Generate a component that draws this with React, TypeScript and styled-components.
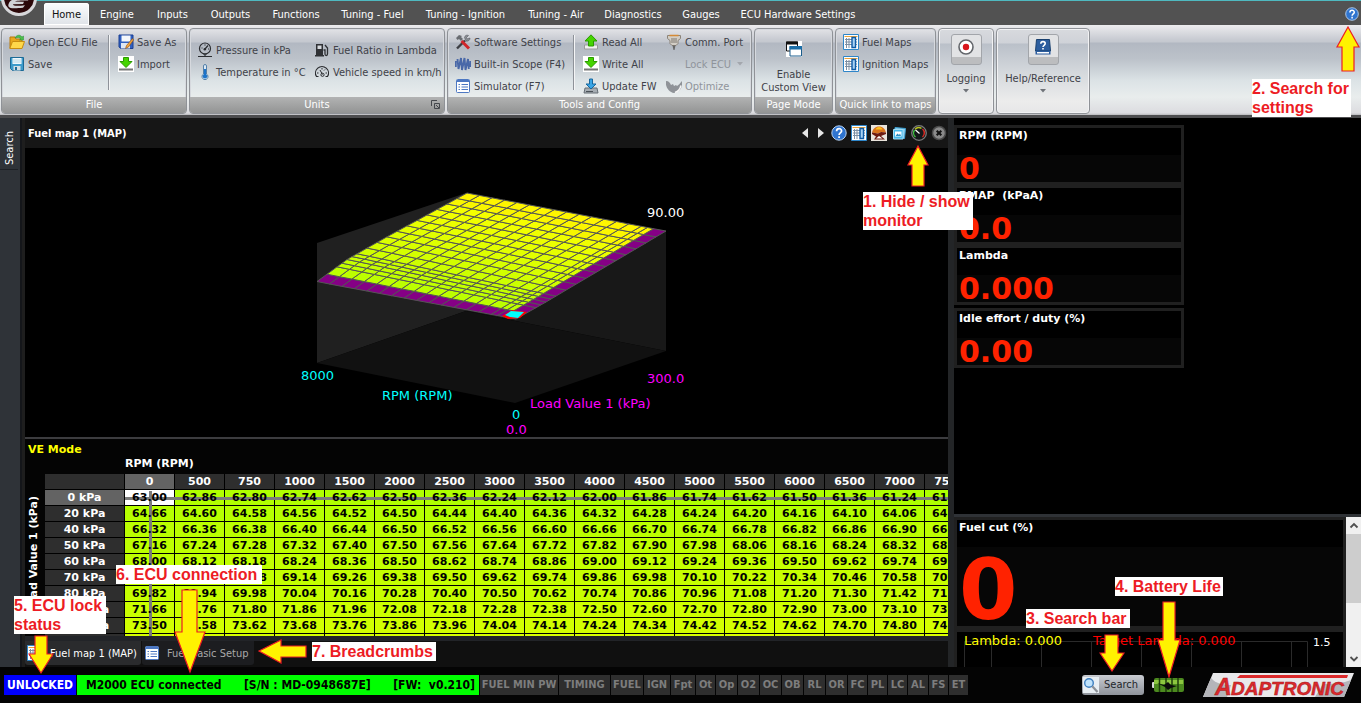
import React from "react";
import styled, { createGlobalStyle, css } from "styled-components";

const ui = `"DejaVu Sans Condensed", "Noto Sans", sans-serif`;
const wide = `"DejaVu Sans", sans-serif`;

const Global = createGlobalStyle`
  *, *::before, *::after { box-sizing: border-box; }
  html, body, #root { height: 100%; margin: 0; }
  body { background: #000; font-family: ${ui}; font-size: 11px; overflow: hidden; }
  button { font: inherit; color: inherit; background: none; border: 0; padding: 0; margin: 0; text-align: inherit; white-space: nowrap; }
  svg { display: block; flex: none; }
`;

const Page = styled.div`
  position: relative;
  display: flex;
  flex-direction: column;
  height: 100vh;
  overflow: hidden;
`;

/* ---------- menu ---------- */
const MenuBar = styled.header`
  flex: none;
  display: flex;
  align-items: stretch;
  height: 25px;
  padding: 2px 2px 0 0;
  border-top: 1px solid #4fb9c0;
  background: #525252;
`;
const LogoSlot = styled.div`
  width: 44px;
  margin-top: -3px;
  overflow: hidden;
`;
const MenuTabs = styled.nav`
  display: flex;
  flex: 1;
`;
const MenuTab = styled.button<{ $w: number; $active?: boolean }>`
  width: ${(p) => p.$w}px;
  text-align: center;
  color: #fff;
  ${(p) =>
    p.$active &&
    css`
      color: #111;
      background: linear-gradient(#fbfcfd, #dfe3e8);
      border-radius: 3px 3px 0 0;
      box-shadow: inset 0 0 0 1px #fff;
    `}
`;

/* ---------- ribbon ---------- */
const Ribbon = styled.section`
  flex: none;
  display: flex;
  gap: 2px;
  height: 93px;
  padding: 3px 1px 2px;
  border-bottom: 3px solid #4d4d4f;
  background: linear-gradient(#ececee 0, #c9ccd3 14px, #c4c8cf 17px, #b2b8c2 18px, #bcc2ca 34px, #dce3e6 56px, #e9eded 72px, #dcdce0 88px, #b9b9bc 90px);
`;
const Group = styled.div<{ $w: number; $light?: boolean }>`
  flex: none;
  display: flex;
  flex-direction: column;
  width: ${(p) => p.$w}px;
  height: 86px;
  border: 1px solid #8f9297;
  border-radius: 4px;
  overflow: hidden;
  color: #3f4249;
  box-shadow: inset 0 0 0 1px #d6d9de;
  ${(p) =>
    p.$light &&
    css`
      background: linear-gradient(#d8dade 0, #cfd2d8 14px, #bac0c9 15px, #d5d9dd 44px, #ececec 72px, #e6e6e8 84px);
      box-shadow: inset 0 0 0 1px #f2f2f4;
    `}
`;
const GroupBody = styled.div<{ $top?: number }>`
  flex: 1;
  display: flex;
  padding: ${(p) => p.$top ?? 2}px 0 0 7px;
`;
const GroupFoot = styled.div`
  position: relative;
  height: 16px;
  line-height: 16px;
  text-align: center;
  color: #fff;
  background: linear-gradient(#b2b3b3, #939494);
`;
const Launcher = styled.button`
  position: absolute;
  right: 4px;
  top: 3px;
`;
const Column = styled.div<{ $w: number }>`
  width: ${(p) => p.$w}px;
  flex: none;
`;
const Divider = styled.div`
  width: 2px;
  height: 55px;
  margin: 4px 8px 0 0;
  background: #8e9299;
  border-right: 1px solid #f4f5f6;
`;
const Tool = styled.button<{ $off?: boolean }>`
  display: flex;
  align-items: center;
  gap: 3px;
  height: 22px;
  color: ${(p) => (p.$off ? "#8f949b" : "inherit")};
`;
const IconBox = styled.span`
  width: 16px;
  height: 16px;
`;
const Big = styled.button`
  flex: 1;
  display: flex;
  flex-direction: column;
  align-items: center;
  line-height: 13px;
  text-align: center;
`;
const BigIcon = styled.span<{ $framed?: boolean }>`
  display: flex;
  justify-content: center;
  ${(p) =>
    p.$framed
      ? css`
          width: 31px;
          height: 31px;
          margin: 5px 0 7px;
          padding-top: 4px;
          border: 1px solid #a2a5aa;
          border-radius: 3px;
          background: linear-gradient(#e2e3e5 0 22px, #bcbdbf 22px);
        `
      : css`
          margin: 12px 0 11px;
        `}
`;

/* ---------- work area ---------- */
const Main = styled.main`
  flex: 1;
  min-height: 0;
  display: flex;
`;
const SideRail = styled.aside`
  flex: none;
  width: 25px;
  background: #2f3338;
  border-right: 3px solid #1e1e1e;
  box-shadow: inset -2px 0 0 #14161a;
`;
const RailTab = styled.button`
  writing-mode: vertical-rl;
  transform: rotate(180deg);
  width: 18px;
  height: 52px;
  padding: 4px 0 0 0;
  color: #fff;
  line-height: 15px;
  border-top: 1px solid #1e2126;
`;
const Work = styled.section`
  flex: 1;
  min-width: 0;
  display: flex;
  flex-direction: column;
  background: #000;
`;
const TitleBar = styled.div`
  flex: none;
  display: flex;
  align-items: center;
  gap: 4px;
  height: 30px;
  padding: 0 1px 0 3px;
  background: #161616;
  color: #fff;
`;
const PaneTitle = styled.h1`
  flex: 1;
  margin: 0;
  font-size: 11px;
  font-weight: bold;
`;
const ChartPane = styled.div`
  flex: 1;
  min-height: 0;
  svg {
    width: 100%;
    height: 100%;
    font-family: ${wide};
    font-size: 13px;
  }
`;
const TablePane = styled.div`
  flex: none;
  height: 199px;
  padding-top: 4px;
  overflow: hidden;
  border-top: 2px solid #3c3c3f;
  background: #040404;
  font-family: ${wide};
  font-size: 11px;
  font-weight: bold;
  color: #fff;
`;
const Mode = styled.div`
  padding-left: 3px;
  line-height: 14px;
  color: #ff0;
`;
const AxisTitle = styled.div`
  padding-left: 100px;
  line-height: 14px;
`;
const TableRow = styled.div`
  display: flex;
  margin-top: 3px;
`;
const LoadAxis = styled.div`
  flex: none;
  width: 20px;
  height: 162px;
  padding-bottom: 22px;
  writing-mode: vertical-rl;
  transform: rotate(180deg);
  line-height: 18px;
  text-align: right;
  white-space: nowrap;
`;
const GridWrap = styled.div`
  position: relative;
  z-index: 0;
  flex: none;
  &::before,
  &::after {
    content: "";
    position: absolute;
    background: #7b7b7b;
  }
  &::before {
    left: 80px;
    right: 0;
    top: 23px;
    height: 3px;
  }
  &::after {
    left: 104px;
    width: 3px;
    top: 17px;
    bottom: 0;
  }
`;
const Table = styled.table`
  table-layout: fixed;
  width: 930px;
  border-collapse: separate;
  border-spacing: 0;
  line-height: 15px;
  text-align: center;
  th,
  td {
    height: 16px;
    padding: 0;
    border-right: 1px solid #000;
    border-bottom: 1px solid #000;
  }
  td {
    color: #000;
  }
`;
const HeadCell = styled.th<{ $on?: boolean }>`
  background: ${(p) => (p.$on ? "#636363" : "#2e2e2e")};
`;
const Cell = styled.td<{ $c: string }>`
  background: ${(p) => p.$c};
`;
const CellText = styled.span`
  position: relative;
  z-index: 1;
`;
const DocTabs = styled.div`
  flex: none;
  display: flex;
  gap: 1px;
  height: 31px;
  padding-bottom: 2px;
  border-top: 5px solid #222428;
  background: #101010;
`;
const DocTab = styled.button<{ $w: number; $on?: boolean }>`
  display: flex;
  align-items: center;
  gap: 7px;
  width: ${(p) => p.$w}px;
  padding-left: 2px;
  border-radius: 0 0 3px 3px;
  color: ${(p) => (p.$on ? "#fff" : "#a9a9a9")};
  background: ${(p) => (p.$on ? "#2a2b2d" : "#1c1d20")};
`;

/* ---------- monitor ---------- */
const Monitor = styled.aside`
  flex: none;
  width: 413px;
  display: flex;
  flex-direction: column;
  border-left: 6px solid #232527;
  background: #000;
  font-family: ${wide};
  color: #fff;
`;
const Gauges = styled.div`
  flex: 1;
  padding-top: 7px;
`;
const Gauge = styled.div<{ $gap?: boolean; $big?: boolean }>`
  width: ${(p) => (p.$big ? "100%" : "230px")};
  height: ${(p) => (p.$big ? 112 : 60)}px;
  margin-top: ${(p) => (p.$gap ? 3 : 0)}px;
  border: 3px solid #202020;
  padding-left: 2px;
  white-space: pre;
  background: linear-gradient(#000 0 27px, #060606 27px);
`;
const GaugeName = styled.div`
  font-size: 11px;
  line-height: 15px;
  font-weight: bold;
`;
const Reading = styled.div<{ $big?: boolean }>`
  font-size: ${(p) => (p.$big ? 84 : 30)}px;
  line-height: ${(p) => (p.$big ? 84 : 34)}px;
  margin-top: ${(p) => (p.$big ? 13 : 9)}px;
  font-weight: bold;
  color: #ff2200;
`;
const Lower = styled.div`
  flex: none;
  display: flex;
  height: 153px;
  border-top: 3px solid #2f3236;
`;
const LowerBody = styled.div`
  flex: 1;
  overflow: hidden;
`;
const Trend = styled.div`
  height: 44px;
  border: 3px solid #202020;
  svg {
    font-size: 13px;
  }
`;
const ScrollBar = styled.div`
  width: 15px;
  display: flex;
  flex-direction: column;
  background: #f0f0f0;
`;
const ScrollEnd = styled.button`
  height: 17px;
`;
const Thumb = styled.div`
  height: 69px;
  margin-bottom: auto;
  background: #cdcdcd;
`;

/* ---------- status bar ---------- */
const Status = styled.footer`
  flex: none;
  display: flex;
  gap: 1px;
  height: 36px;
  padding: 8px 7px 8px 4px;
  background: #040404;
  font-size: 12px;
  font-weight: bold;
  line-height: 20px;
  text-align: center;
  white-space: pre;
`;
const Lock = styled.div`
  width: 72px;
  background: #0000ff;
  color: #fff;
`;
const Link = styled.div`
  width: 402px;
  display: flex;
  justify-content: space-between;
  padding: 0 4px 0 9px;
  background: #0f0;
  color: #000;
`;
const Flag = styled.div<{ $w: number }>`
  width: ${(p) => p.$w}px;
  background: #2e2e2e;
  color: #7d7d7d;
  font-size: 11px;
`;
const StatusRight = styled.div`
  flex: none;
  margin-left: auto;
  display: flex;
  align-items: center;
  gap: 8px;
`;
const SearchButton = styled.button`
  display: flex;
  align-items: center;
  gap: 5px;
  width: 62px;
  height: 20px;
  padding-left: 1px;
  border-radius: 3px;
  background: linear-gradient(#c9ccd2, #8f939b);
  color: #23262b;
  font-size: 11px;
  font-weight: normal;
`;
const BrandSlot = styled.div`
  margin-left: 10px;
`;

/* ---------- callouts ---------- */
type Side = { $l?: number; $r?: number; $t?: number; $b?: number };
const place = css<Side>`
  position: absolute;
  z-index: 2;
  ${(p) => p.$l !== undefined && `left: ${p.$l}px;`}
  ${(p) => p.$r !== undefined && `right: ${p.$r}px;`}
  ${(p) => p.$t !== undefined && `top: ${p.$t}px;`}
  ${(p) => p.$b !== undefined && `bottom: ${p.$b}px;`}
`;
const Note = styled.div<Side & { $w: number }>`
  ${place}
  width: ${(p) => p.$w}px;
  background: #fff;
  color: #ed1c24;
  font: bold 16px/19px "Liberation Sans", sans-serif;
`;
const ArrowAt = styled.div<Side>`
  ${place}
`;
const Arrow = ({ w, h, pts }: { w: number; h: number; pts: string }) => (
  <svg width={w} height={h} viewBox={`0 0 ${w} ${h}`} aria-hidden="true">
    <polygon points={pts} fill="#fff200" stroke="#ed1c24" strokeWidth="1.2" />
  </svg>
);

/* ---------- icons ---------- */
const G = ({ s = 16, children }: { s?: number; children: React.ReactNode }) => (
  <svg width={s} height={s} viewBox="0 0 16 16" fill="none" aria-hidden="true">
    {children}
  </svg>
);
const icons = {
  open: (
    <G>
      <path d="M1 3h5l1 2h6v9H1z" fill="#e8a71c" stroke="#b97a0a" />
      <path d="M3.500 7.500H15.500L13 14.500H.8z" fill="#ffd84a" stroke="#c88d10" />
      <path d="M6 4c1-3 5-4 7-1l1.500-1v4h-4l1.500-1C11 3.500 8.500 3 6 4z" fill="#4cc04a" stroke="#2b8a35" strokeWidth=".5" />
    </G>
  ),
  save: (
    <G>
      <path d="M1.500 1.500h13v13h-11l-2-2z" fill="#3d9bcb" stroke="#1c6a96" />
      <path d="M3.500 2h9v6h-9z" fill="#eef7fb" />
      <path d="M4.500 10h7v4.500h-7z" fill="#d5dfe5" />
      <path d="M6 11h2v3H6z" fill="#1f6c97" />
      <path d="M3.500 4h9M3.500 6h9" stroke="#b8d8e6" />
    </G>
  ),
  saveAs: (
    <G>
      <path d="M1 1h14v13.500H3L1 13z" fill="#2f5fc0" stroke="#1b3f92" />
      <path d="M3.500 1.500h9v6h-9z" fill="#f4f7fb" />
      <path d="M3 9h9v5.500H3z" fill="#dfe6f2" />
      <path d="M14.500 4.500l-6 7-1 3 3-1.500 5-7z" fill="#f0a23c" stroke="#8a4d12" strokeWidth=".6" />
    </G>
  ),
  down: (
    <G>
      <path d="M0 0h16v16H0z" fill="#fff" />
      <path d="M5.500 1.500h5v4h3.500L8 11.500 2 5.500h3.500z" fill="#45d400" stroke="#2a9a00" />
      <path d="M1 13.500h14" stroke="#777" strokeWidth="2" />
    </G>
  ),
  up: (
    <G>
      <path d="M1.500 11h13v4h-13z" fill="#f1f1f1" stroke="#9b9b9b" />
      <path d="M8 .8L14 7h-3.500v5h-5V7H2z" fill="#45d400" stroke="#2a9a00" />
    </G>
  ),
  update: (
    <G>
      <path d="M2 10h12l1 5H1z" fill="#a6adb3" stroke="#666e75" />
      <path d="M6.500 1h3v5H13L8 11 3 6h3.500z" fill="#39a5e6" stroke="#17679d" />
      <path d="M3 13.500h7" stroke="#4a5157" />
    </G>
  ),
  pressure: (
    <G>
      <circle cx="8" cy="6.500" r="5.500" stroke="#2a2c30" strokeWidth="1.200" />
      <path d="M8 7l3-3.500M4.500 6h1M8 2.500v1M11 7h1M6 12h4M1 14.500h14M8 12v2.500" stroke="#2a2c30" strokeWidth="1.200" />
      <circle cx="7.800" cy="7.200" r="1.200" fill="#2a2c30" />
    </G>
  ),
  temp: (
    <G>
      <path d="M6.500 2a1.500 1.500 0 013 0v8a3 3 0 11-3 0z" fill="#dcebf7" stroke="#5580a8" />
      <path d="M8 5v7" stroke="#1d74c9" strokeWidth="2" />
      <circle cx="8" cy="12.300" r="2.200" fill="#1d74c9" />
    </G>
  ),
  pump: (
    <G>
      <path d="M2 2h7v11H2zM1 13h9v1.500H1z" fill="#2f3135" />
      <path d="M3.500 3.500h4V7h-4z" fill="#d6d9dd" />
      <path d="M9.500 8h1.500v4c0 2 2.500 2 2.500 0V6l-2.500-3" stroke="#2f3135" strokeWidth="1.300" />
    </G>
  ),
  speed: (
    <G>
      <path d="M4.500 12.500H2.500a6.500 6.500 0 1111 0h-2" stroke="#2a2c30" strokeWidth="1.200" />
      <path d="M6 6l2.500 4.500M3 9h1.500M11.500 9H13M8 4v1.500M11 5.500l-1 1" stroke="#2a2c30" />
      <circle cx="8.500" cy="10.800" r="1.600" stroke="#2a2c30" />
    </G>
  ),
  tools: (
    <G>
      <path d="M2 14.500L10 6.500" stroke="#3c3e43" strokeWidth="2.400" />
      <path d="M9.500 3.500a3 3 0 014-2l-2 2 1 1.500 2.500-1a3 3 0 01-4 3z" fill="#8b8f95" stroke="#55585e" strokeWidth=".6" />
      <path d="M1 4l3-3 3 1-1 1 2 2-2 2-2-2-1.500 1z" fill="#6a6d72" />
      <path d="M6.500 7L14 14.500" stroke="#d0262a" strokeWidth="3" />
    </G>
  ),
  scope: (
    <G>
      <path d="M.8 5v6M2.500 3l1 10L6 2l1 12L9.500 2l1 12L13 3l.8 10M15.300 5v6" stroke="#4968a8" strokeWidth="1.900" />
    </G>
  ),
  list: (
    <G>
      <rect x="1.500" y="1.500" width="13" height="13" rx="1" fill="#fff" stroke="#4d78c2" />
      <path d="M2 2h12v2H2z" fill="#4d78c2" />
      <path d="M3.500 6.500h1.500M3.500 9h1.500M3.500 11.500h1.500M6.500 6.500H13M6.500 9H13M6.500 11.500H13" stroke="#4d78c2" />
    </G>
  ),
  port: (
    <G>
      <path d="M1.500 1.500h13v3l-2.500 2v3l-2 2H6l-2-2v-3l-2.500-2z" fill="#d3cec6" stroke="#8b8378" />
      <path d="M3.500 1.500h9" stroke="#d58a35" strokeWidth="1.600" />
      <path d="M6 4v5M8 4v5M10 4v5" stroke="#7c766e" />
      <path d="M6.500 11.500h3L8.500 16h-1z" fill="#666" />
    </G>
  ),
  optimize: (
    <G>
      <path d="M0 3c3 0 4 2 5 4l2-1 1 2 2-1 1 1c2-1 3-3 5-5 1 6-2 11-8 12C3 14-1 9 0 3z" fill="#8f9398" />
      <path d="M9 14.500c3-1 5-3 6-7" stroke="#f4f4f4" strokeWidth="1.500" />
    </G>
  ),
  windows: (
    <G>
      <path d="M0 0h16v16H0z" fill="#fff" />
      <path d="M.5 1h11v9H.5z" fill="#fff" stroke="#111" />
      <path d="M0 .5h12v3H0z" fill="#111" />
      <path d="M4 5.500h11.500v9.500H4z" fill="#fff" stroke="#1b5d8c" />
      <path d="M3.500 5H16v3.500H3.500z" fill="#1b6ea8" />
    </G>
  ),
  map: (
    <G>
      <path d="M.5.5h15v15H.5z" fill="#fff" stroke="#2e86c9" />
      <path d="M1.500 2.500h13" stroke="#eda43a" />
      <path d="M2 5.500h12M2 8h12M2 10.500h12M3.500 4v10M6 4v10" stroke="#7c8fa3" />
      <path d="M9 3.500h3.500v10H9z" fill="#a9d2f3" stroke="#0f5ba6" strokeWidth="1.400" />
    </G>
  ),
  record: (
    <G>
      <circle cx="8" cy="8" r="7" fill="#fff" stroke="#63666b" strokeWidth="1.600" />
      <circle cx="8" cy="8" r="3.200" fill="#d9151b" />
    </G>
  ),
  book: (
    <G>
      <path d="M1.500.5h13L15.500 12H.5z" fill="#2c5d9e" stroke="#19406f" />
      <path d="M.5 12h15v3.500H.5z" fill="#2c5d9e" />
      <path d="M2 13h12v1.500H2z" fill="#fff" />
      <path d="M5.800 4.800c0-3 4.400-2.800 4.400-.2 0 1.700-2.200 1.700-2.200 3.400M8 9v1.600" stroke="#fff" strokeWidth="1.600" />
    </G>
  ),
  help: (
    <G>
      <circle cx="8" cy="8" r="7.200" fill="#2f74cf" stroke="#b9d2f0" />
      <path d="M5.600 6.200c0-3.400 5-3.200 5-.2 0 1.900-2.500 2-2.500 4M8.100 11.200V13" stroke="#fff" strokeWidth="1.700" />
    </G>
  ),
  surface: (
    <G>
      <path d="M0 0h16v16H0z" fill="#e9e4dc" />
      <path d="M1 7.500C2 4 4 1.500 8 1.500S14 4 15 7.500l-5-.5-3 1.500z" fill="#d9731c" />
      <path d="M4.500 4.500c1-3.500 6-3.500 7 0z" fill="#ffc21e" />
      <path d="M1 7.500l6 1 3-1.500 5 .5v1.500l-5 2 4 3.500H3l2-3-4-2.500z" fill="#6d1a10" />
      <path d="M5 13.500l3-2.500 3.500 2.500z" fill="#fff" />
    </G>
  ),
  picture: (
    <G>
      <path d="M4 2.500l10.500 1-1 10-10-1z" fill="#8ccdee" stroke="#3b9fd0" />
      <path d="M2.500 4.500h9.500v9.500h-9.500z" fill="#46b8ea" stroke="#9fdcf5" />
      <path d="M4 6.500h6.500v5H4z" fill="#fff" />
      <path d="M4.500 11l2-2.500L8 10l1-1.500 1 2.500z" fill="#2a8fc4" />
    </G>
  ),
  dial: (
    <G>
      <circle cx="8" cy="8" r="7.300" fill="#15181a" stroke="#7b7b7b" strokeWidth="1.300" />
      <path d="M4.500 12A5.300 5.300 0 013.500 5" stroke="#3ec53e" strokeWidth="1.400" />
      <path d="M4 4.300A5.300 5.300 0 0110.500 3.300" stroke="#b9c21f" strokeWidth="1.400" />
      <path d="M11.500 4A5.300 5.300 0 0111.500 12" stroke="#dd2a22" strokeWidth="1.400" />
      <path d="M4.500 5l4 3.500" stroke="#fff" strokeWidth="1.200" />
    </G>
  ),
  close: (
    <G>
      <circle cx="8" cy="8" r="6.500" fill="#8a8a8a" stroke="#4a4a4a" strokeWidth="1.500" />
      <path d="M5.700 5.700l4.600 4.600M10.300 5.700l-4.600 4.600" stroke="#111" strokeWidth="2" />
    </G>
  ),
  find: (
    <G>
      <path d="M0 0h16v16H0z" fill="#e8eef3" />
      <circle cx="6" cy="6" r="4.300" fill="#bfe2fb" stroke="#3e7fc0" strokeWidth="1.400" />
      <path d="M9.300 9.300L14.500 15" stroke="#8b9097" strokeWidth="2.200" />
    </G>
  ),
};

const CaretMark = styled.svg<{ $low?: boolean }>`
  margin-top: ${(p) => (p.$low ? 4 : 0)}px;
`;
const Caret = ({ fill = "#6f7379", low }: { fill?: string; low?: boolean }) => (
  <CaretMark $low={low} width="6" height="4" viewBox="0 0 6 4" aria-hidden="true">
    <path d="M0 0h6L3 3.500z" fill={fill} />
  </CaretMark>
);
const Tri = ({ d }: { d: string }) => (
  <svg width="12" height="12" viewBox="0 0 12 12" aria-hidden="true">
    <path d={d} fill="#e6e6e6" />
  </svg>
);

const AppLogo = () => (
  <svg width="40" height="18" viewBox="0 0 40 18" aria-hidden="true">
    <circle cx="19" cy="-2" r="16.500" fill="#2b0709" stroke="#d7d7da" strokeWidth="3" />
    <path d="M9 3C11-1 16-2 30-3l-2 3.500c-8 0-12 0-13 1l9 .2-1 2.300-10 .2c0 2 5 2 12 1l-2 2.500C13 8.500 6 9 9 3z" fill="#d0d0d4" />
  </svg>
);

const Brand = () => (
  <svg width="152" height="28" viewBox="0 0 152 28" role="img" aria-label="Adaptronic">
    <path d="M11 2h141l-10 24H1z" fill="#e9e9eb" />
    <path d="M149 9c-8 3-16 4-28 4l-8 13h29z" fill="#b4b5b9" />
    <path d="M9 7C6 14 3 21 1 26h24l4-12C22 14 14 13 9 7z" fill="#b4b5b9" />
    <path d="M38 4h108l-1 3H35z" fill="#dc2a2c" />
    <g fontFamily={`"Liberation Sans", sans-serif`} fontWeight="bold" fontStyle="italic" fill="#dc2a2c" stroke="#a5161c" strokeWidth=".5">
      <text x="13" y="24" fontSize="23">
        A
      </text>
      <text x="29" y="24" fontSize="19">
        DAPTRONIC
      </text>
    </g>
  </svg>
);

const Battery = () => (
  <svg width="32" height="14" viewBox="0 0 32 14" role="img" aria-label="Battery">
    <rect x="0" y="4" width="3" height="6" rx="1" fill="#d8d8d8" />
    <rect x="2" y="0" width="30" height="14" rx="2" fill="#4c8a1f" />
    <rect x="2" y="2" width="29" height="4" fill="#8cc63f" />
    <path d="M7.500 0v14M14 0v14M20 0v14M26 0v14" stroke="#1c3d0b" strokeWidth="1.500" />
    <path d="M5 5l7 2 4-3 3 3 6 1-6 2-3 2-3-3z" fill="#0b0b0b" />
  </svg>
);

/* ---------- data ---------- */
const menu: [string, number][] = [
  ["Home", 45], ["Engine", 56], ["Inputs", 55], ["Outputs", 61], ["Functions", 70], ["Tuning - Fuel", 83],
  ["Tuning - Ignition", 103], ["Tuning - Air", 78], ["Diagnostics", 76], ["Gauges", 60], ["ECU Hardware Settings", 134],
];
const rpm = [0, 500, 750, 1000, 1500, 2000, 2500, 3000, 3500, 4000, 4500, 5000, 5500, 6000, 6500, 7000, 7500];
const rows: [number, number[]][] = [
  [0, [63.0, 62.86, 62.8, 62.74, 62.62, 62.5, 62.36, 62.24, 62.12, 62.0, 61.86, 61.74, 61.62, 61.5, 61.36, 61.24, 61.12]],
  [20, [64.66, 64.6, 64.58, 64.56, 64.52, 64.5, 64.44, 64.4, 64.36, 64.32, 64.28, 64.24, 64.2, 64.16, 64.1, 64.06, 64.02]],
  [40, [66.32, 66.36, 66.38, 66.4, 66.44, 66.5, 66.52, 66.56, 66.6, 66.66, 66.7, 66.74, 66.78, 66.82, 66.86, 66.9, 66.94]],
  [50, [67.16, 67.24, 67.28, 67.32, 67.4, 67.5, 67.56, 67.64, 67.72, 67.82, 67.9, 67.98, 68.06, 68.16, 68.24, 68.32, 68.4]],
  [60, [68.0, 68.12, 68.18, 68.24, 68.36, 68.5, 68.62, 68.74, 68.86, 69.0, 69.12, 69.24, 69.36, 69.5, 69.62, 69.74, 69.86]],
  [70, [68.9, 69.02, 69.08, 69.14, 69.26, 69.38, 69.5, 69.62, 69.74, 69.86, 69.98, 70.1, 70.22, 70.34, 70.46, 70.58, 70.7]],
  [80, [69.82, 69.94, 69.98, 70.04, 70.16, 70.28, 70.4, 70.5, 70.62, 70.74, 70.86, 70.96, 71.08, 71.2, 71.3, 71.42, 71.54]],
  [100, [71.66, 71.76, 71.8, 71.86, 71.96, 72.08, 72.18, 72.28, 72.38, 72.5, 72.6, 72.7, 72.8, 72.9, 73.0, 73.1, 73.2]],
  [120, [73.5, 73.58, 73.62, 73.68, 73.76, 73.86, 73.96, 74.04, 74.14, 74.24, 74.34, 74.42, 74.52, 74.62, 74.7, 74.8, 74.9]],
  [140, [75.32, 75.4, 75.44, 75.48, 75.56, 75.64, 75.72, 75.8, 75.88, 75.96, 76.04, 76.12, 76.2, 76.28, 76.36, 76.44, 76.52]],
];
const shade = (ve: number) => {
  const t = Math.max(0, ve - 62);
  const red = Math.min(255, Math.round(174 + t * 3));
  const green = ve > 86 ? 246 : 255;
  return `rgb(${red},${green},0)`;
};

/* ---------- 3D surface ---------- */
const loads = [0, 20, 40, 50, 60, 70, 80, 100, 120, 140, 160, 180, 200, 220, 240, 260, 280, 300];
const speeds = [...rpm, 8000];
const veAt = (s: number, l: number) => {
  const f = s / 8000;
  const row = rows.find((r) => r[0] === l);
  if (row && l <= 120) return row[1][Math.min(speeds.indexOf(s), 16)];
  return 73.5 + 1.5 * f + ((l - 120) / 180) * (16.5 - 3 * f);
};
const point = (s: number, l: number): [number, number] => {
  const u = s / 8000;
  const v = l / 300;
  return [516 - 199 * u + 150 * v, 403 - 40 * u - 52 * v - 1.333 * veAt(s, l)];
};
const surfaceCells = loads.slice(1).flatMap((l, j) =>
  speeds.slice(1).map((s, i) => {
    const s0 = speeds[i];
    const l0 = loads[j];
    const pts = [point(s0, l0), point(s, l0), point(s, l), point(s0, l)];
    const fill = i === 0 || j === 0 ? "#850085" : shade(veAt(s, l));
    return <polygon key={`${s}-${l}`} points={pts.map((p) => p.map((n) => n.toFixed(1)).join()).join(" ")} fill={fill} />;
  })
);

const Surface = () => (
  <svg viewBox="25 148 923 289" preserveAspectRatio="xMidYMid meet" role="img" aria-label="Fuel map surface">
    <polygon points="317,243 466,193 466,311 317,363" fill="#202020" />
    <polygon points="466,193 666,231 666,351 466,311" fill="#181818" />
    <polygon points="317,363 466,311 666,351 515,403" fill="#111" />
    <g stroke="#555" strokeWidth="1">
      {surfaceCells}
    </g>
    <polygon points="502,316 512,310 527,312 520,318 508,319" fill="#f00" />
    <polygon points="505,315 511,311 524,312 518,318 510,317" fill="#0ff" />
    <g fill="#fff">
      <text x="647" y="217">90.00</text>
    </g>
    <g fill="#0ff">
      <text x="301" y="380">8000</text>
      <text x="382" y="400">RPM (RPM)</text>
      <text x="512" y="419">0</text>
    </g>
    <g fill="#f0f">
      <text x="647" y="383">300.0</text>
      <text x="530" y="408">Load Value 1 (kPa)</text>
      <text x="506" y="434">0.0</text>
    </g>
  </svg>
);

const flags: [string, number][] = [
  ["FUEL MIN PW", 78], ["TIMING", 51], ["FUEL", 32], ["IGN", 26], ["Fpt", 24], ["Ot", 19], ["Op", 21], ["O2", 21], ["OC", 21],
  ["OB", 21], ["RL", 21], ["OR", 21], ["FC", 19], ["PL", 19], ["LC", 19], ["AL", 20], ["FS", 19], ["ET", 19],
];

const Item = ({ icon, off, children }: { icon?: keyof typeof icons; off?: boolean; children: React.ReactNode }) => (
  <Tool $off={off}>
    <IconBox>{icon && icons[icon]}</IconBox>
    {children}
  </Tool>
);

export default function App() {
  return (
    <Page>
      <Global />
      <MenuBar>
        <LogoSlot>
          <AppLogo />
        </LogoSlot>
        <MenuTabs>
          {menu.map(([name, w], i) => (
            <MenuTab key={name} $w={w} $active={i === 0}>
              {name}
            </MenuTab>
          ))}
        </MenuTabs>
        <button aria-label="Help">
          <G s={14}>{icons.help.props.children}</G>
        </button>
      </MenuBar>

      <Ribbon>
        <Group $w={186}>
          <GroupBody>
            <Column $w={99}>
              <Item icon="open">Open ECU File</Item>
              <Item icon="save">Save</Item>
            </Column>
            <Divider />
            <Column $w={64}>
              <Item icon="saveAs">Save As</Item>
              <Item icon="down">Import</Item>
            </Column>
          </GroupBody>
          <GroupFoot>File</GroupFoot>
        </Group>
        <Group $w={256}>
          <GroupBody $top={10}>
            <Column $w={117}>
              <Item icon="pressure">Pressure in kPa</Item>
              <Item icon="temp">Temperature in °C</Item>
            </Column>
            <Column $w={130}>
              <Item icon="pump">Fuel Ratio in Lambda</Item>
              <Item icon="speed">Vehicle speed in km/h</Item>
            </Column>
          </GroupBody>
          <GroupFoot>
            Units
            <Launcher aria-label="Unit options">
              <svg width="9" height="9" viewBox="0 0 9 9" fill="none" aria-hidden="true">
                <path d="M.5 6V.5H6M3.500 3.500h5v5h-5zM5 5l3 3" stroke="#45484d" />
              </svg>
            </Launcher>
          </GroupFoot>
        </Group>
        <Group $w={305}>
          <GroupBody>
            <Column $w={118}>
              <Item icon="tools">Software Settings</Item>
              <Item icon="scope">Built-in Scope (F4)</Item>
              <Item icon="list">Simulator (F7)</Item>
            </Column>
            <Divider />
            <Column $w={83}>
              <Item icon="up">Read All</Item>
              <Item icon="down">Write All</Item>
              <Item icon="update">Update FW</Item>
            </Column>
            <Column $w={84}>
              <Item icon="port">Comm. Port</Item>
              <Item off>
                Lock ECU&nbsp; <Caret fill="#a3a7ad" />
              </Item>
              <Item icon="optimize" off>
                Optimize
              </Item>
            </Column>
          </GroupBody>
          <GroupFoot>Tools and Config</GroupFoot>
        </Group>
        <Group $w={79}>
          <Big>
            <BigIcon>{icons.windows}</BigIcon>
            Enable
            <br />
            Custom View
          </Big>
          <GroupFoot>Page Mode</GroupFoot>
        </Group>
        <Group $w={101}>
          <GroupBody>
            <Column $w={90}>
              <Item icon="map">Fuel Maps</Item>
              <Item icon="map">Ignition Maps</Item>
            </Column>
          </GroupBody>
          <GroupFoot>Quick link to maps</GroupFoot>
        </Group>
        <Group $w={56} $light>
          <Big>
            <BigIcon $framed>{icons.record}</BigIcon>
            Logging
            <Caret low />
          </Big>
        </Group>
        <Group $w={94} $light>
          <Big>
            <BigIcon $framed>{icons.book}</BigIcon>
            Help/Reference
            <Caret low />
          </Big>
        </Group>
      </Ribbon>

      <Main>
        <SideRail>
          <RailTab>Search</RailTab>
        </SideRail>
        <Work>
          <TitleBar>
            <PaneTitle>Fuel map 1 (MAP)</PaneTitle>
            <button aria-label="Previous"><Tri d="M9 1v10L3 6z" /></button>
            <button aria-label="Next"><Tri d="M3 1v10l6-5z" /></button>
            <button aria-label="Help">{icons.help}</button>
            <button aria-label="Table">{icons.map}</button>
            <button aria-label="Surface">{icons.surface}</button>
            <button aria-label="Picture">{icons.picture}</button>
            <button aria-label="Monitor">{icons.dial}</button>
            <button aria-label="Close">{icons.close}</button>
          </TitleBar>
          <ChartPane>
            <Surface />
          </ChartPane>
          <TablePane>
            <Mode>VE Mode</Mode>
            <AxisTitle>RPM (RPM)</AxisTitle>
            <TableRow>
              <LoadAxis>Load Value 1 (kPa)</LoadAxis>
              <GridWrap>
                <Table>
                  <colgroup>
                    <col style={{ width: 80 }} />
                    {rpm.map((r) => (
                      <col key={r} />
                    ))}
                  </colgroup>
                  <thead>
                    <tr>
                      <HeadCell />
                      {rpm.map((r, i) => (
                        <HeadCell key={r} $on={i === 0}>
                          {r}
                        </HeadCell>
                      ))}
                    </tr>
                  </thead>
                  <tbody>
                    {rows.map(([load, values], j) => (
                      <tr key={load}>
                        <HeadCell $on={j === 0}>{load} kPa</HeadCell>
                        {values.map((v, i) => (
                          <Cell key={rpm[i]} $c={i + j === 0 ? "#fff" : shade(v)}>
                            <CellText>{v.toFixed(2)}</CellText>
                          </Cell>
                        ))}
                      </tr>
                    ))}
                  </tbody>
                </Table>
              </GridWrap>
            </TableRow>
          </TablePane>
          <DocTabs>
            <DocTab $w={116} $on>
              {icons.map}
              Fuel map 1 (MAP)
            </DocTab>
            <DocTab $w={112}>
              {icons.list}
              Fuel Basic Setup
            </DocTab>
          </DocTabs>
        </Work>

        <Monitor>
          <Gauges>
            <Gauge>
              <GaugeName>RPM (RPM)</GaugeName>
              <Reading>0</Reading>
            </Gauge>
            <Gauge>
              <GaugeName>PMAP{"  "}(kPaA)</GaugeName>
              <Reading>0.0</Reading>
            </Gauge>
            <Gauge>
              <GaugeName>Lambda</GaugeName>
              <Reading>0.000</Reading>
            </Gauge>
            <Gauge $gap>
              <GaugeName>Idle effort / duty (%)</GaugeName>
              <Reading>0.00</Reading>
            </Gauge>
          </Gauges>
          <Lower>
            <LowerBody>
              <Gauge $big>
                <GaugeName>Fuel cut (%)</GaugeName>
                <Reading $big>0</Reading>
              </Gauge>
              <Trend>
                <svg width="386" height="38" viewBox="957 632 386 38">
                  <path d="M964.5 670V641.5H1307.500V670M991.500 641v29M1041.500 641v29M1091.500 641v29M1141.500 641v29M1191.500 641v29M1241.500 641v29M1291.500 641v29" stroke="#2a2a2a" fill="none" />
                  <text x="964" y="645" fill="#ff0">Lambda: 0.000</text>
                  <text x="1093" y="645" fill="#f00">Target Lambda: 0.000</text>
                  <text x="1313" y="646" fill="#fff" fontSize="11">1.5</text>
                </svg>
              </Trend>
            </LowerBody>
            <ScrollBar>
              <ScrollEnd aria-label="Scroll up">
                <svg width="15" height="17" viewBox="0 0 15 17" fill="none" aria-hidden="true">
                  <path d="M4.500 10.500L8 7l3.500 3.500" stroke="#505050" strokeWidth="1.800" />
                </svg>
              </ScrollEnd>
              <Thumb />
              <ScrollEnd aria-label="Scroll down">
                <svg width="15" height="17" viewBox="0 0 15 17" fill="none" aria-hidden="true">
                  <path d="M4.500 7L8 10.500 11.500 7" stroke="#505050" strokeWidth="1.800" />
                </svg>
              </ScrollEnd>
            </ScrollBar>
          </Lower>
        </Monitor>
      </Main>

      <Status>
        <Lock>UNLOCKED</Lock>
        <Link>
          <span>M2000 ECU connected</span>
          <span>[S/N : MD-0948687E]</span>
          <span>[FW:{"  "}v0.210]</span>
        </Link>
        {flags.map(([name, w]) => (
          <Flag key={name} $w={w}>
            {name}
          </Flag>
        ))}
        <StatusRight>
          <SearchButton>
            {icons.find}
            Search
          </SearchButton>
          <Battery />
          <BrandSlot>
            <Brand />
          </BrandSlot>
        </StatusRight>
      </Status>

      <Note $l={863} $t={192} $w={110}>1. Hide / show<br />monitor</Note>
      <Note $r={10} $t={79} $w={99}>2. Search for<br />settings</Note>
      <Note $r={231} $b={75} $w={104}>3. Search bar</Note>
      <Note $r={138} $b={107} $w={108}>4. Battery Life</Note>
      <Note $l={14} $b={69} $w={92}>5. ECU lock<br />status</Note>
      <Note $l={116} $b={119} $w={146}>6. ECU connection</Note>
      <Note $l={312} $b={42} $w={124}>7. Breadcrumbs</Note>
      <ArrowAt $l={906} $t={144}><Arrow w={24} h={43} pts="12,2 22,21 18,21 18,42 6,42 6,21 2,21" /></ArrowAt>
      <ArrowAt $r={1} $t={25}><Arrow w={24} h={47} pts="12,2 23,22 18,22 18,46 6,46 6,22 1,22" /></ArrowAt>
      <ArrowAt $r={236} $b={31}><Arrow w={26} h={38} pts="6,1 19,1 19,19 25,19 13,37 1,19 6,19" /></ArrowAt>
      <ArrowAt $r={180} $b={25}><Arrow w={24} h={77} pts="6,1 18,1 18,39 23,39 12,76 1,39 6,39" /></ArrowAt>
      <ArrowAt $l={28} $b={28}><Arrow w={26} h={40} pts="7,1 19,1 19,19 25,19 13,38 1,19 7,19" /></ArrowAt>
      <ArrowAt $l={174} $b={29}><Arrow w={32} h={85} pts="8,1 23,1 23,43 31,43 16,83 1,43 8,43" /></ArrowAt>
      <ArrowAt $l={257} $b={39}><Arrow w={50} h={25} pts="2,12 24,1 24,7 49,7 49,18 24,18 24,24" /></ArrowAt>
    </Page>
  );
}
